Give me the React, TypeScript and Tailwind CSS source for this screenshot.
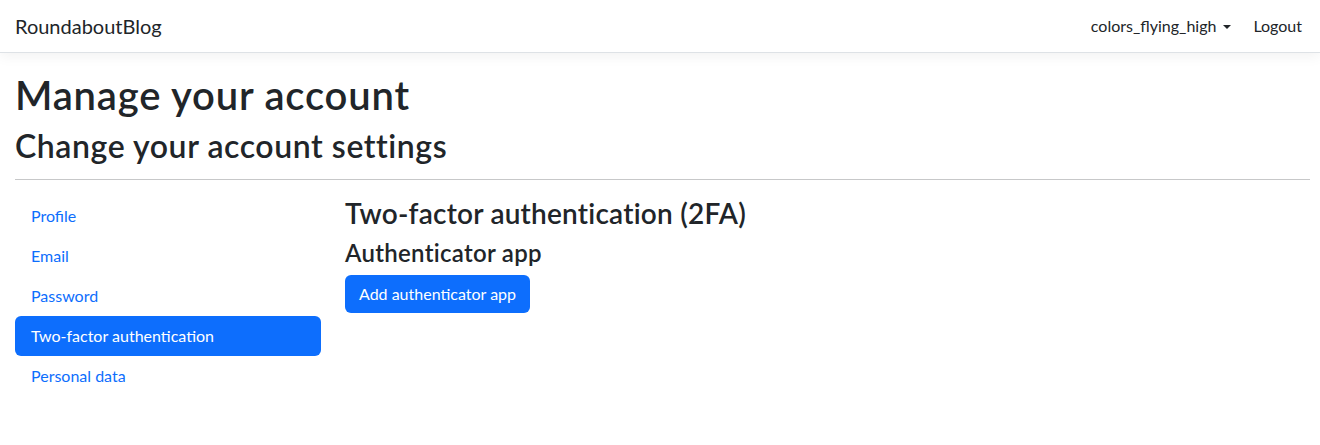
const font = { fontFamily: '"Segoe UI", Lato, "Noto Sans", "Liberation Sans", sans-serif' }

const sideLinks = ['Profile', 'Email', 'Password', 'Two-factor authentication', 'Personal data']

function App() {
  const active = 'Two-factor authentication'

  return (
    <div className="min-h-screen bg-white text-[#212529] text-base" style={font}>
      <header className="mb-4 border-b border-[#dee2e6] bg-white shadow-[0_4px_12px_rgba(0,0,0,0.05)]">
        <nav className="flex h-[52px] items-center justify-between pl-[15px] pr-[10px]">
          <a href="#" className="text-xl leading-[30px] text-[#212529]">
            RoundaboutBlog
          </a>
          <div className="flex items-center gap-[6px]">
            <a href="#" className="flex items-center px-2 py-2 leading-6 text-[#212529]">
              colors_flying_high
              <span className="ml-[7px] mt-[1px] inline-block h-0 w-0 border-x-[4.8px] border-t-[4.8px] border-x-transparent border-t-[#212529]" />
            </a>
            <button className="px-2 py-2 leading-6 text-[#212529]">Logout</button>
          </div>
        </nav>
      </header>

      <main className="pl-[15px] pr-[10px]">
        <h1 className="mb-[6px] pt-[2px] text-[40px] font-semibold leading-[48px] tracking-[0.02em]">Manage your account</h1>
        <h2 className="pt-[2px] text-[32px] font-semibold leading-[38.4px] tracking-[0.018em]">Change your account settings</h2>
        <hr className="mb-4 mt-[14px] border-t border-[#212529] opacity-25" />

        <div className="grid grid-cols-[306px_1fr] gap-x-6">
          <ul className="flex flex-col">
            {sideLinks.map((l) => (
              <li key={l}>
                <a
                  href="#"
                  className={
                    l === active
                      ? 'block rounded-md bg-[#0d6efd] px-4 py-2 leading-6 text-white'
                      : 'block rounded-md px-4 py-2 leading-6 text-[#0d6efd]'
                  }
                >
                  {l}
                </a>
              </li>
            ))}
          </ul>

          <div>
            <h3 className="mb-2 pt-[1px] text-[28px] font-semibold leading-[32.6px] tracking-[0.008em]">Two-factor authentication (2FA)</h3>
            <h4 className="mb-2 pt-[1px] text-2xl font-semibold leading-[27.8px] tracking-[0.012em]">Authenticator app</h4>
            <button className="rounded-md bg-[#0d6efd] px-[14px] py-[7px] leading-6 text-white">
              Add authenticator app
            </button>
          </div>
        </div>
      </main>
    </div>
  )
}

export default App
